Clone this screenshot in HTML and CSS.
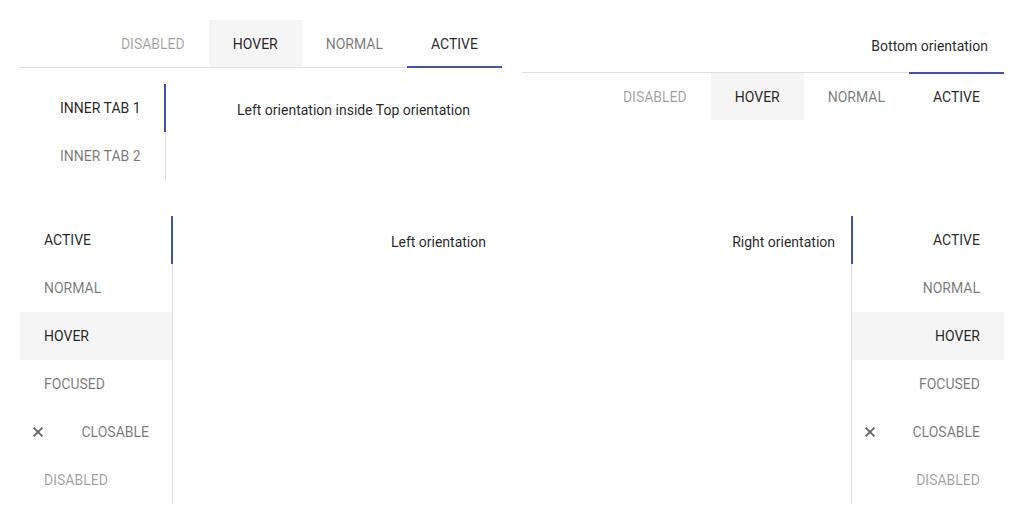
FILE: index.html
```html
<!DOCTYPE html>
<html lang="en">
<head>
<meta charset="utf-8">
<title>Tabs</title>
<link rel="stylesheet" href="styles.css">
</head>
<body>
<div class="page">
  <!-- Top orientation -->
  <div class="tabs tabs-top">
    <div class="tablist tablist-h border-bottom">
      <div class="tab disabled">Disabled</div>
      <div class="tab hover">Hover</div>
      <div class="tab">Normal</div>
      <div class="tab active ind-bottom">Active</div>
    </div>
    <div class="panel panel-nested">
      <div class="tabs tabs-left inner">
        <div class="tablist tablist-v border-right">
          <div class="tab active ind-right">Inner tab 1</div>
          <div class="tab">Inner tab 2</div>
        </div>
        <div class="panel panel-text">Left orientation inside Top orientation</div>
      </div>
    </div>
  </div>

  <!-- Bottom orientation -->
  <div class="tabs tabs-bottom">
    <div class="panel panel-text">Bottom orientation</div>
    <div class="tablist tablist-h border-top">
      <div class="tab disabled">Disabled</div>
      <div class="tab hover">Hover</div>
      <div class="tab">Normal</div>
      <div class="tab active ind-top">Active</div>
    </div>
  </div>

  <!-- Left orientation -->
  <div class="tabs tabs-left">
    <div class="tablist tablist-v fixed border-right">
      <div class="tab active ind-right">Active</div>
      <div class="tab">Normal</div>
      <div class="tab hover">Hover</div>
      <div class="tab">Focused</div>
      <div class="tab closable">
        <svg class="close" viewBox="0 0 16 16" width="16" height="16"><path d="M3.6 3.6L12.4 12.4M12.4 3.6L3.6 12.4"/></svg>
        <span>Closable</span>
      </div>
      <div class="tab disabled">Disabled</div>
    </div>
    <div class="panel panel-text">Left orientation</div>
  </div>

  <!-- Right orientation -->
  <div class="tabs tabs-right">
    <div class="panel panel-text">Right orientation</div>
    <div class="tablist tablist-v fixed border-left">
      <div class="tab active ind-left">Active</div>
      <div class="tab">Normal</div>
      <div class="tab hover">Hover</div>
      <div class="tab">Focused</div>
      <div class="tab closable">
        <svg class="close" viewBox="0 0 16 16" width="16" height="16"><path d="M3.6 3.6L12.4 12.4M12.4 3.6L3.6 12.4"/></svg>
        <span>Closable</span>
      </div>
      <div class="tab disabled">Disabled</div>
    </div>
  </div>
</div>
</body>
</html>
```

FILE: styles.css
```css
* { box-sizing: border-box; }

html, body {
  margin: 0;
  background: #ffffff;
}

body {
  font-family: Roboto, "Liberation Sans", Arial, sans-serif;
  font-size: 14px;
  line-height: 20px;
  color: rgba(0, 0, 0, 0.87);
}

.page {
  display: grid;
  grid-template-columns: 482px 482px;
  column-gap: 20px;
  row-gap: 20px;
  padding: 20px;
  align-items: start;
}

.tabs {
  display: flex;
  flex-direction: column;
}

.tabs-left,
.tabs-right {
  flex-direction: row;
  align-items: flex-start;
}

.tablist {
  display: flex;
}

.tablist-h {
  justify-content: flex-end;
}

.border-bottom { border-bottom: 1px solid #e0e0e0; }
.border-top { border-top: 1px solid #e0e0e0; }
.border-right { border-right: 1px solid #e0e0e0; }
.border-left { border-left: 1px solid #e0e0e0; }

.tablist-v {
  flex-direction: column;
  flex: none;
}

.tablist-v.fixed {
  width: 153px;
}

.tab {
  position: relative;
  display: flex;
  align-items: center;
  padding: 0 24px;
  text-transform: uppercase;
  color: rgba(0, 0, 0, 0.54);
  white-space: nowrap;
}

.tablist-h .tab {
  height: 47px;
}

.tablist-v .tab {
  height: 48px;
}

.tabs-right .tab {
  justify-content: flex-end;
}

.tab.active,
.tab.hover {
  color: rgba(0, 0, 0, 0.87);
}

.tab.hover {
  background: #f5f5f5;
}

.tab.disabled {
  color: rgba(0, 0, 0, 0.38);
}

.tab.closable {
  justify-content: space-between;
  padding: 0 23px 0 10px;
}

.tabs-right .tab.closable {
  padding-right: 24px;
}

.close {
  display: block;
  fill: none;
  stroke: #6a6a6a;
  stroke-width: 2;
}

.tab.active::after {
  content: "";
  position: absolute;
  background: #3f51b5;
}

.ind-bottom::after { left: 0; right: 0; bottom: -1px; height: 2px; }
.ind-top::after { left: 0; right: 0; top: -1px; height: 2px; }
.ind-right::after { top: 0; bottom: 0; right: -1px; width: 2px; }
.ind-left::after { top: 0; bottom: 0; left: -1px; width: 2px; }

.panel {
  padding: 16px;
}

.panel-text {
  text-align: right;
  color: rgba(0, 0, 0, 0.87);
}

.tabs-left .panel,
.tabs-right .panel {
  flex: 1;
}
```
